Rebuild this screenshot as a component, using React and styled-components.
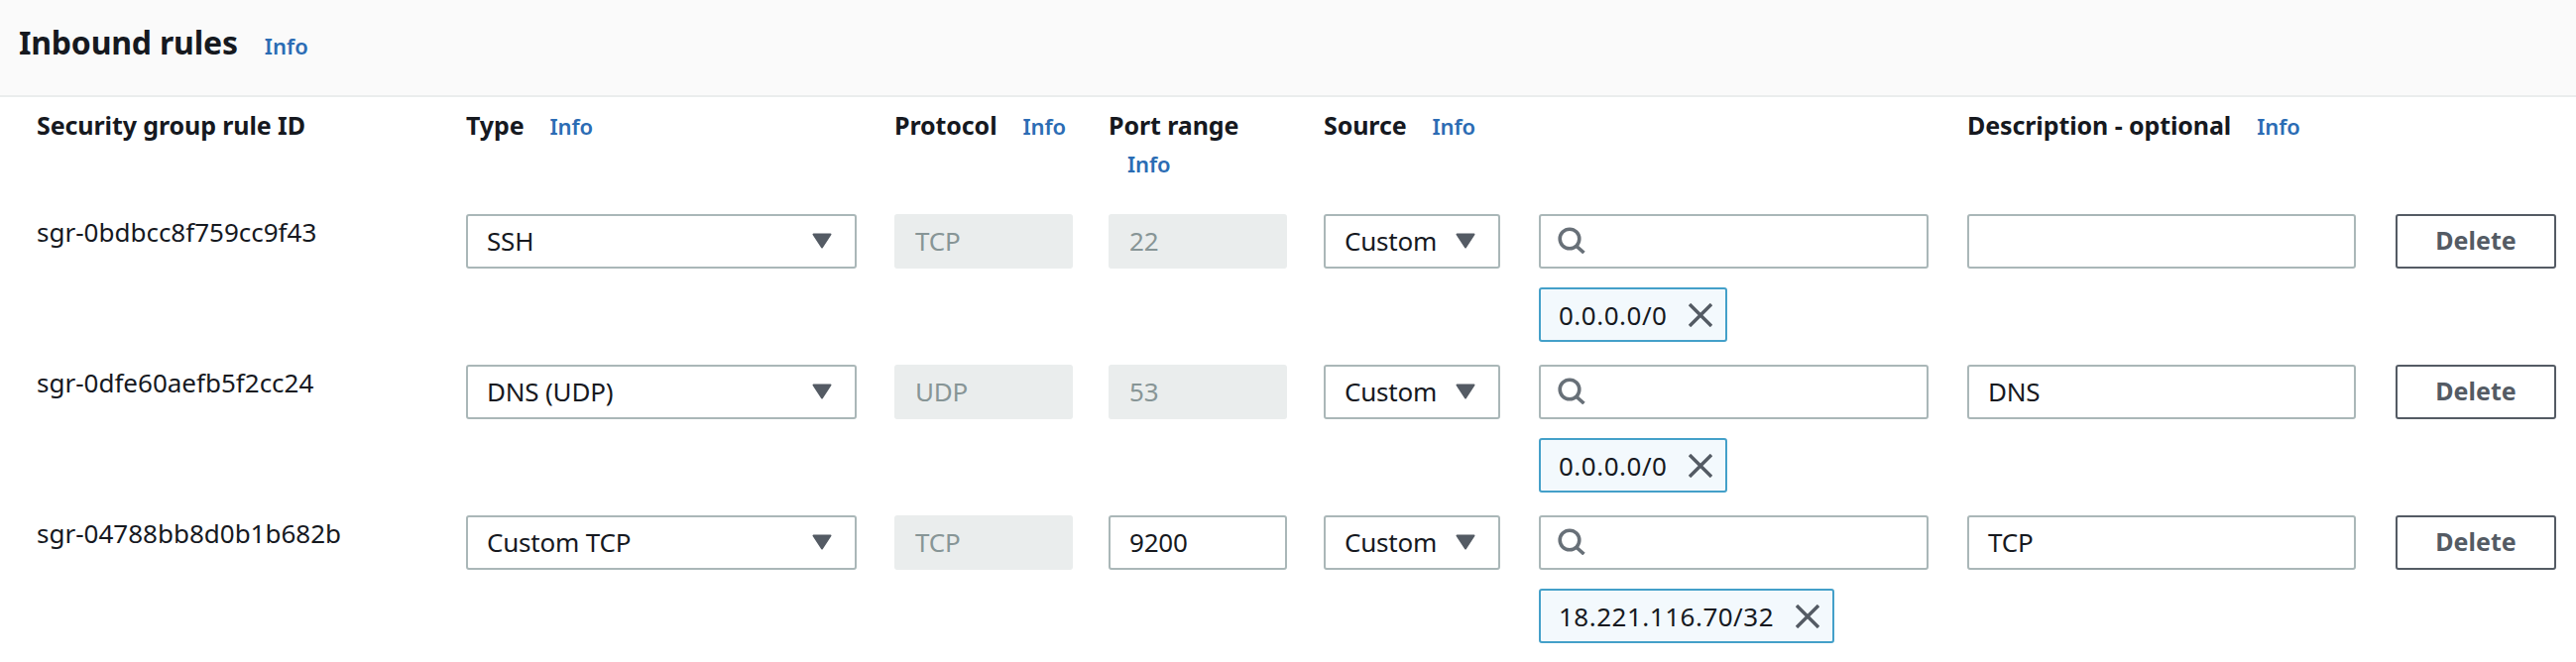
import React from "react";
import styled, { createGlobalStyle } from "styled-components";

const Global = createGlobalStyle`
  html, body { margin: 0; padding: 0; background: #fff; }
  body { font-family: "Noto Sans", "Open Sans", "Liberation Sans", sans-serif; color: #16191f; }
`;

const Page = styled.div`
  width: 2598px;
  height: 668px;
  overflow: hidden;
  background: #fff;
`;

const PanelHeader = styled.header`
  height: 96px;
  box-sizing: content-box;
  background: #fafafa;
  border-bottom: 2px solid #eaeded;
  display: flex;
  align-items: flex-start;
  gap: 27px;
  padding-left: 19px;
`;

const Title = styled.h2`
  margin: 23px 0 0;
  font-size: 32px;
  line-height: 40px;
  font-weight: 700;
  letter-spacing: -0.2px;
`;

const InfoLink = styled.a`
  display: inline-block;
  color: #2b6cb4;
  font-size: 22px;
  line-height: 28px;
  font-weight: 600;
  margin-left: ${(p) => p.$offset || 0}px;
  margin-top: ${(p) => p.$top || 0}px;
`;

const Table = styled.div`
  display: grid;
  grid-template-columns: 433px 432px 216px 217px 217px 432px 432px 162px;
  padding-left: 37px;
`;

const HeadCell = styled.div`
  height: 118px;
  padding-top: 13px;
  box-sizing: border-box;
  font-size: 25px;
  line-height: 30px;
  font-weight: 700;
  letter-spacing: -0.1px;
  display: ${(p) => (p.$stack ? "block" : "flex")};
  align-items: flex-start;
  gap: 26px;
`;

const Cell = styled.div`
  width: ${(p) => (p.$w ? `${p.$w}px` : "auto")};
  height: 152px;
  display: flex;
  flex-direction: column;
  align-items: flex-start;
  gap: 19px;
`;

const IdText = styled.div`
  font-size: 26px;
  line-height: 30px;
  padding-top: 3px;
`;

const Field = styled.div`
  width: 100%;
  height: 55px;
  box-sizing: border-box;
  border: 2px solid #aab7b8;
  border-radius: 3px;
  background: #fff;
  display: flex;
  align-items: center;
  justify-content: space-between;
  padding: 0 23px 2px 19px;
  font-size: 26px;
  letter-spacing: -0.2px;
`;

const Disabled = styled(Field)`
  background: #eaeded;
  border-color: #eaeded;
  color: #879596;
`;

const SearchField = styled(Field)`
  justify-content: flex-start;
  padding-left: 17px;
`;

const Tag = styled.div`
  height: 55px;
  box-sizing: border-box;
  border: 2px solid #44a0c9;
  border-radius: 3px;
  background: #f3f9fd;
  display: flex;
  align-items: center;
  gap: 22px;
  padding: 0 13px 0 18px;
  font-size: 26px;
  letter-spacing: 0.5px;
`;

const DeleteButton = styled.button`
  width: 100%;
  height: 55px;
  box-sizing: border-box;
  border: 2px solid #545b64;
  border-radius: 3px;
  background: #fff;
  color: #545b64;
  font-family: inherit;
  font-size: 25px;
  font-weight: 700;
  padding: 0 0 3px;
`;

const Caret = () => (
  <svg width="20" height="16" viewBox="0 0 20 16">
    <path d="M1.5 1.5h17L10 14.5z" fill="#545b64" stroke="#545b64" strokeWidth="2" strokeLinejoin="round" />
  </svg>
);

const SearchIcon = () => (
  <svg width="28" height="27" viewBox="0 0 28 27" fill="none" stroke="#687078" strokeWidth="3.6">
    <circle cx="12" cy="12" r="9.8" />
    <path d="M18.5 19l8 7" />
  </svg>
);

const CloseIcon = () => (
  <svg width="24" height="24" viewBox="0 0 24 24" fill="none" stroke="#545b64" strokeWidth="3.4">
    <path d="M1 1l22 22M23 1L1 23" />
  </svg>
);

const rows = [
  { id: "sgr-0bdbcc8f759cc9f43", type: "SSH", proto: "TCP", port: "22", tag: "0.0.0.0/0", desc: "" },
  { id: "sgr-0dfe60aefb5f2cc24", type: "DNS (UDP)", proto: "UDP", port: "53", tag: "0.0.0.0/0", desc: "DNS" },
  { id: "sgr-04788bb8d0b1b682b", type: "Custom TCP", proto: "TCP", port: "9200", editable: true, tag: "18.221.116.70/32", desc: "TCP" },
];

export default function App() {
  return (
    <Page>
      <Global />
      <PanelHeader>
        <Title>Inbound rules</Title>
        <InfoLink $top={32}>Info</InfoLink>
      </PanelHeader>
      <Table>
        <HeadCell>Security group rule ID</HeadCell>
        <HeadCell>Type <InfoLink $top={2}>Info</InfoLink></HeadCell>
        <HeadCell>Protocol <InfoLink $top={2}>Info</InfoLink></HeadCell>
        <HeadCell $stack>Port range<br /><InfoLink $offset={19} $top={10}>Info</InfoLink></HeadCell>
        <HeadCell>Source <InfoLink $top={2}>Info</InfoLink></HeadCell>
        <HeadCell />
        <HeadCell>Description - optional <InfoLink $top={2}>Info</InfoLink></HeadCell>
        <HeadCell />
        {rows.map((r) => (
          <React.Fragment key={r.id}>
            <Cell><IdText>{r.id}</IdText></Cell>
            <Cell $w={394}><Field>{r.type}<Caret /></Field></Cell>
            <Cell $w={180}><Disabled>{r.proto}</Disabled></Cell>
            <Cell $w={180}>{r.editable ? <Field>{r.port}</Field> : <Disabled>{r.port}</Disabled>}</Cell>
            <Cell $w={178}><Field>Custom<Caret /></Field></Cell>
            <Cell $w={393}>
              <SearchField><SearchIcon /></SearchField>
              <Tag>{r.tag}<CloseIcon /></Tag>
            </Cell>
            <Cell $w={392}><Field>{r.desc}</Field></Cell>
            <Cell $w={162}><DeleteButton>Delete</DeleteButton></Cell>
          </React.Fragment>
        ))}
      </Table>
    </Page>
  );
}
